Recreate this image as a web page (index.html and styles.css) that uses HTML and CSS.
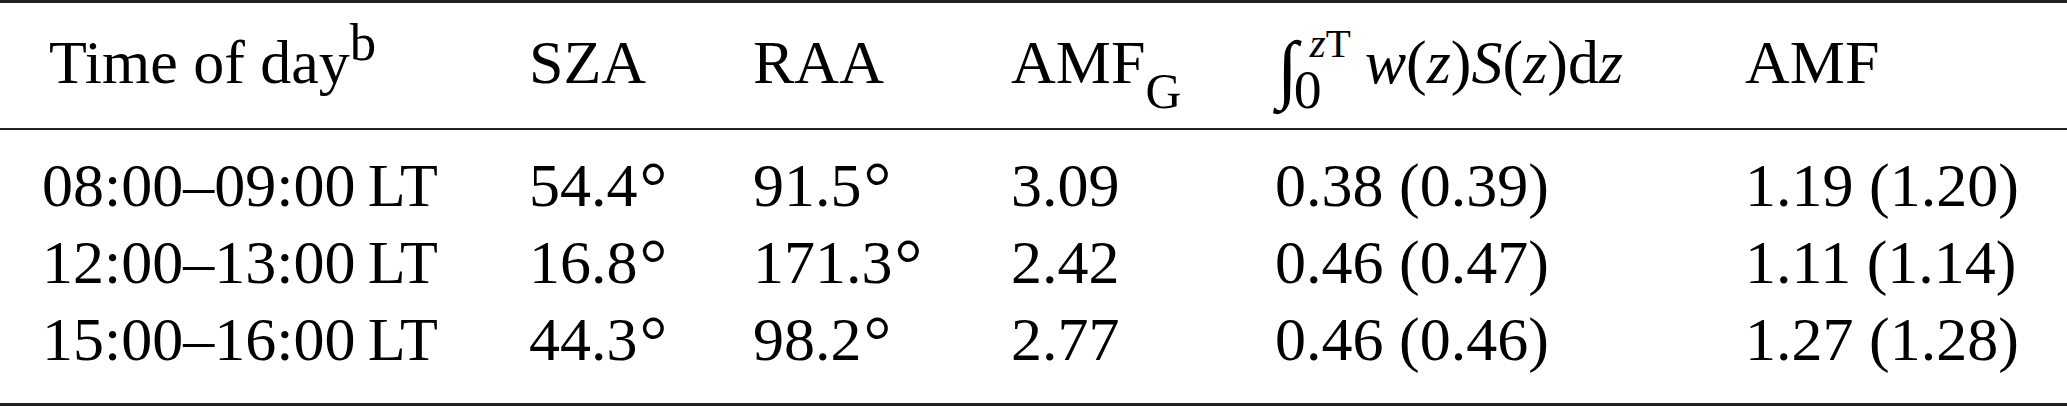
FILE: index.html
```html
<!DOCTYPE html>
<html>
<head>
  <meta charset="UTF-8">
  <title>AMF table</title>
  <link rel="stylesheet" href="styles.css">
</head>
<body>
<table class="amf-table">
  <colgroup>
    <col class="c-time">
    <col class="c-sza">
    <col class="c-raa">
    <col class="c-amfg">
    <col class="c-int">
    <col class="c-amf">
  </colgroup>
  <thead>
    <tr>
      <th class="time">Time of day<sup class="note">b</sup></th>
      <th>SZA</th>
      <th>RAA</th>
      <th>AMF<sub class="geo">G</sub></th>
      <th><span class="int">∫</span><span class="lim-lo">0</span><span class="lim-up"><i>z</i>T</span><span class="expr"><i>w</i>(<i>z</i>)<i>S</i>(<i>z</i>)d<i>z</i></span></th>
      <th>AMF</th>
    </tr>
  </thead>
  <tbody>
    <tr>
      <td>08:00–09:00&thinsp;LT</td>
      <td>54.4<span class="deg">°</span></td>
      <td>91.5<span class="deg">°</span></td>
      <td>3.09</td>
      <td>0.38 (0.39)</td>
      <td>1.19 (1.20)</td>
    </tr>
    <tr>
      <td>12:00–13:00&thinsp;LT</td>
      <td>16.8<span class="deg">°</span></td>
      <td>171.3<span class="deg">°</span></td>
      <td>2.42</td>
      <td>0.46 (0.47)</td>
      <td>1.11 (1.14)</td>
    </tr>
    <tr>
      <td>15:00–16:00&thinsp;LT</td>
      <td>44.3<span class="deg">°</span></td>
      <td>98.2<span class="deg">°</span></td>
      <td>2.77</td>
      <td>0.46 (0.46)</td>
      <td>1.27 (1.28)</td>
    </tr>
  </tbody>
</table>
</body>
</html>
```

FILE: styles.css
```css
body {
  margin: 0;
  background: #fff;
}

.amf-table {
  width: 2067px;
  table-layout: fixed;
  border-collapse: separate;
  border-spacing: 0;
  border-top: 3px solid #222;
  border-bottom: 3px solid #222;
  font-family: "Liberation Serif", "Times New Roman", serif;
  font-size: 62px;
  line-height: 77px;
  color: #000;
}

.c-time { width: 529px; }
.c-sza { width: 224px; }
.c-raa { width: 258px; }
.c-amfg { width: 264px; }
.c-int { width: 470px; }
.c-amf { width: 322px; }

th, td {
  padding: 0;
  text-align: left;
  font-weight: normal;
  white-space: nowrap;
}

thead th {
  padding-top: 21px;
  padding-bottom: 27px;
  border-bottom: 2px solid #222;
}

tbody tr:first-child td {
  padding-top: 17px;
}

tbody tr:last-child td {
  padding-bottom: 25px;
}

td:first-child {
  padding-left: 42px;
}

th.time {
  padding-left: 49px;
}

.note {
  font-size: 0.85em;
  line-height: 0;
  vertical-align: 23px;
}

.geo {
  font-size: 0.8em;
  line-height: 0;
  vertical-align: -25px;
}

.deg {
  font-size: 1.12em;
  line-height: 0;
  vertical-align: -4px;
  margin-left: 2px;
}

.int {
  font-size: 76px;
  line-height: 0;
  vertical-align: -11px;
  margin-left: 2px;
}

.lim-lo {
  font-size: 0.9em;
  line-height: 0;
  vertical-align: -25px;
  margin-left: -4px;
}

.lim-up {
  font-size: 0.66em;
  line-height: 0;
  vertical-align: 26px;
  margin-left: -12px;
}

.expr {
  margin-left: 14px;
}
```
